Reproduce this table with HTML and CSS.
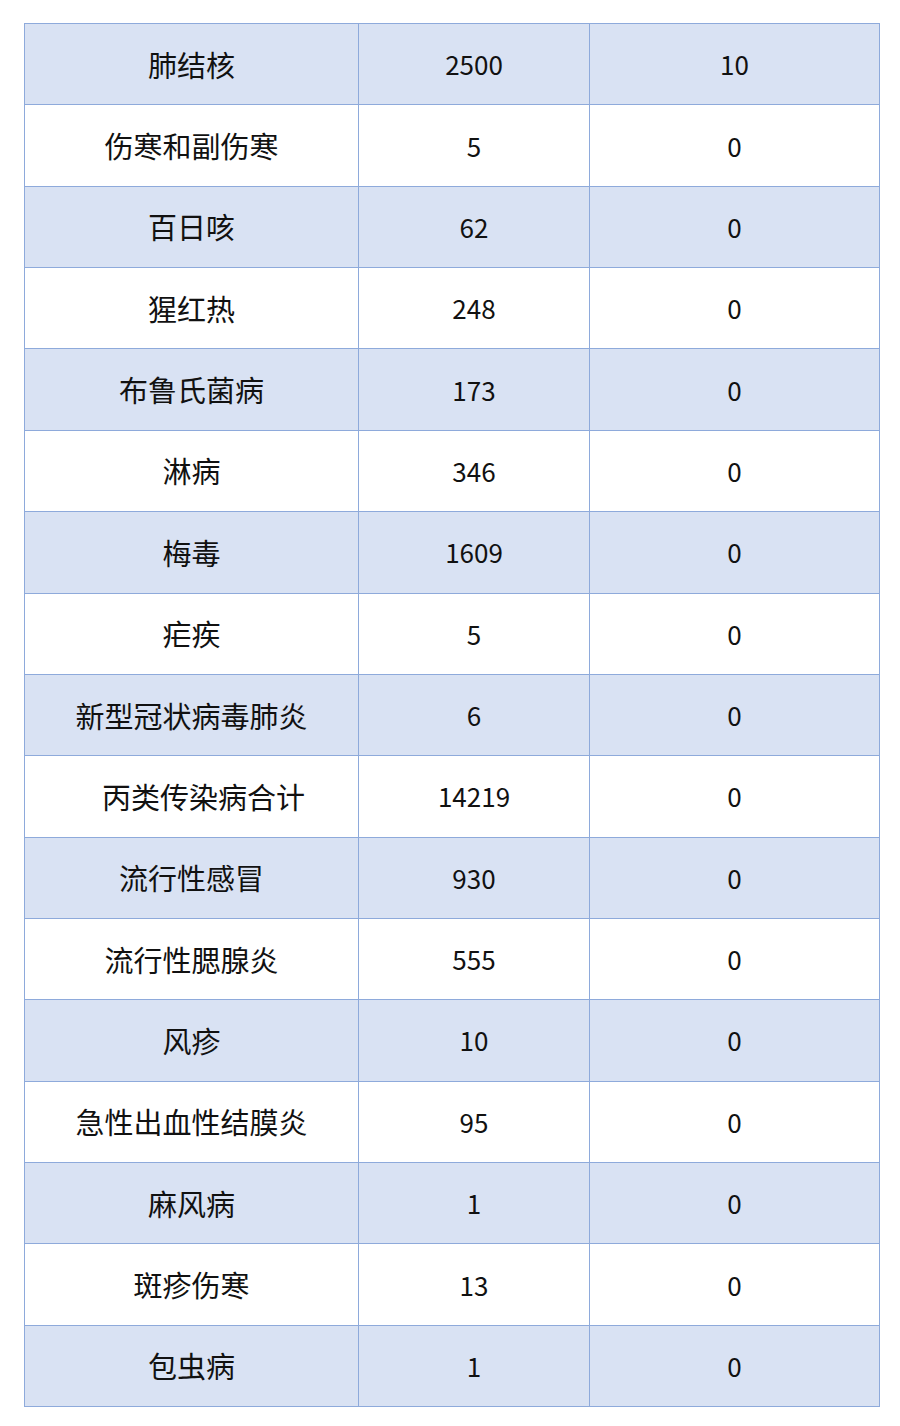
FILE: index.html
```html
<!DOCTYPE html>
<html lang="zh-CN">
<head>
<meta charset="utf-8">
<title>传染病统计</title>
<link rel="stylesheet" href="styles.css">
</head>
<body>
<div class="page">
<table class="stats">
<colgroup><col class="c1"><col class="c2"><col class="c3"></colgroup>
<tbody>
<tr class="alt"><td>肺结核</td><td class="num">2500</td><td class="num">10</td></tr>
<tr><td>伤寒和副伤寒</td><td class="num">5</td><td class="num">0</td></tr>
<tr class="alt"><td>百日咳</td><td class="num">62</td><td class="num">0</td></tr>
<tr><td>猩红热</td><td class="num">248</td><td class="num">0</td></tr>
<tr class="alt"><td>布鲁氏菌病</td><td class="num">173</td><td class="num">0</td></tr>
<tr><td>淋病</td><td class="num">346</td><td class="num">0</td></tr>
<tr class="alt"><td>梅毒</td><td class="num">1609</td><td class="num">0</td></tr>
<tr><td>疟疾</td><td class="num">5</td><td class="num">0</td></tr>
<tr class="alt"><td>新型冠状病毒肺炎</td><td class="num">6</td><td class="num">0</td></tr>
<tr><td class="indent">丙类传染病合计</td><td class="num">14219</td><td class="num">0</td></tr>
<tr class="alt"><td>流行性感冒</td><td class="num">930</td><td class="num">0</td></tr>
<tr><td>流行性腮腺炎</td><td class="num">555</td><td class="num">0</td></tr>
<tr class="alt"><td>风疹</td><td class="num">10</td><td class="num">0</td></tr>
<tr><td>急性出血性结膜炎</td><td class="num">95</td><td class="num">0</td></tr>
<tr class="alt"><td>麻风病</td><td class="num">1</td><td class="num">0</td></tr>
<tr><td>斑疹伤寒</td><td class="num">13</td><td class="num">0</td></tr>
<tr class="alt"><td>包虫病</td><td class="num">1</td><td class="num">0</td></tr>
</tbody>
</table>
</div>
</body>
</html>
```

FILE: styles.css
```css
html, body {
  margin: 0;
  padding: 0;
  background: #ffffff;
}

.page {
  padding: 23px 0 0 24px;
}

.stats {
  border-collapse: collapse;
  table-layout: fixed;
  width: 855px;
  font-family: "Noto Sans CJK SC", "Noto Sans", sans-serif;
  color: #111111;
}

.c1 { width: 334px; }
.c2 { width: 231px; }
.c3 { width: 290px; }

.stats td {
  border: 1px solid #8eaadb;
  height: 80.36px;
  padding: 0;
  text-align: center;
  vertical-align: middle;
  font-size: 29px;
  line-height: 1;
  background: #ffffff;
}

.stats tr.alt td {
  background: #d9e2f3;
}

.stats td.num {
  font-size: 26px;
}

.stats td.indent {
  padding-left: 24px;
}
```
